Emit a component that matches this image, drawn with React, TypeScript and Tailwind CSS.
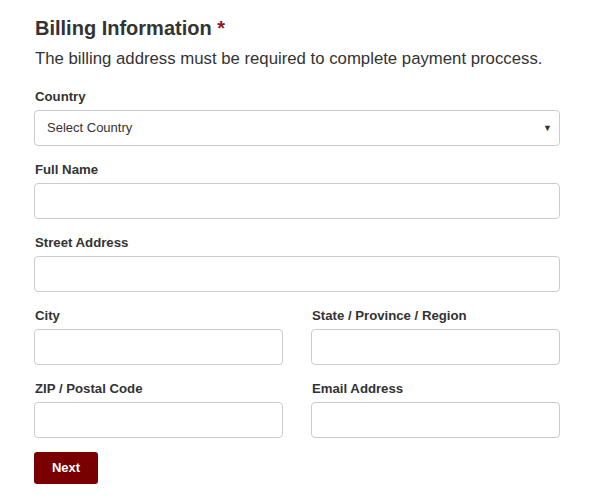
import { ChangeEvent } from 'react';

function Field({ label, className = '' }: { label: string; className?: string }) {
    return (
        <div className={`flex flex-col ${className}`}>
            <label className="text-[13.2px] font-bold text-[#333] leading-[16px] mb-[5px] pl-px">{label}</label>
            <input
                type="text"
                className="h-[36px] w-full rounded-[4px] border border-[#cccccc] bg-white px-3 text-[13px] outline-none"
            />
        </div>
    );
}

export default function App() {
    const onChange = (_e: ChangeEvent<HTMLSelectElement>) => {};
    return (
        <div className="min-h-screen bg-white font-['Liberation_Sans',Arial,sans-serif] text-[#333]">
            <div className="w-[526px] ml-[34px] pt-[16px]">
                <h2 className="text-[20px] font-bold leading-[24px] text-[#333] pl-px">
                    Billing Information <span className="text-[#8b1c1c]">*</span>
                </h2>
                <p className="mt-[8px] text-[16.75px] leading-[22px] text-[#333] pl-px">
                    The billing address must be required to complete payment proccess.
                </p>

                <div className="mt-[19px] flex flex-col">
                    <label className="text-[13.2px] font-bold leading-[16px] mb-[5px] pl-px">Country</label>
                    <div className="relative">
                        <select
                            onChange={onChange}
                            className="h-[36px] w-full appearance-none rounded-[4px] border border-[#cccccc] bg-white pl-3 text-[13px] text-[#333] outline-none"
                        >
                            <option>Select Country</option>
                        </select>
                        <span className="pointer-events-none absolute right-[8px] top-[12px] text-[9px] text-[#333]">▼</span>
                    </div>
                </div>

                <Field label="Full Name" className="mt-[16px]" />
                <Field label="Street Address" className="mt-[16px]" />

                <div className="mt-[16px] grid grid-cols-2 gap-x-[28px] gap-y-[16px]">
                    <Field label="City" />
                    <Field label="State / Province / Region" />
                    <Field label="ZIP / Postal Code" />
                    <Field label="Email Address" />
                </div>

                <button className="mt-[14px] h-[32px] w-[64px] rounded-[3px] bg-[#7a0000] text-[13px] font-bold text-white">
                    Next
                </button>
            </div>
        </div>
    );
}
